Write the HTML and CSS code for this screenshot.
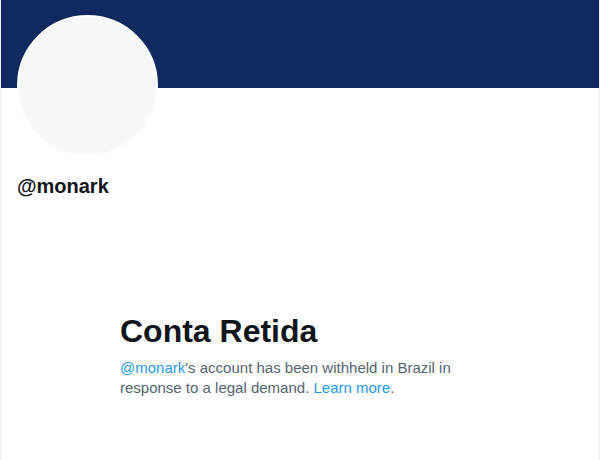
FILE: index.html
```html
<!DOCTYPE html>
<html lang="pt">
<head>
  <meta charset="UTF-8" />
  <meta name="viewport" content="width=device-width, initial-scale=1.0"/>
  <title>@monark</title>
  <link rel="stylesheet" href="styles.css">
</head>
<body>
  <div class="page">
    <div class="banner"></div>
    <div class="profile">
      <div class="avatar"></div>
      <div class="handle">@monark</div>
    </div>
    <div class="notice">
      <h1 class="notice-title">Conta Retida</h1>
      <p class="notice-text"><a href="#" class="link">@monark</a>'s account has been withheld in Brazil in response to a legal demand. <a href="#" class="link">Learn more</a>.</p>
    </div>
  </div>
</body>
</html>
```

FILE: styles.css
```css
* {
  box-sizing: border-box;
}

body {
  margin: 0;
  background: #fff;
  font-family: "Liberation Sans", Arial, sans-serif;
  color: #0f1419;
}

.page {
  width: 600px;
  min-height: 100vh;
  border-left: 1px solid #eff3f4;
  border-right: 1px solid #eff3f4;
}

.banner {
  height: 88px;
  background: #10295f;
}

.profile {
  padding: 0 16px;
}

.avatar {
  width: 141px;
  height: 141px;
  margin-top: -73px;
  border-radius: 50%;
  background: #f7f9f9;
  border: 2px solid #fbfcfc;
}

.handle {
  margin-top: 19px;
  font-size: 20px;
  line-height: 23px;
  font-weight: bold;
}

.notice {
  padding: 115px 0 0 119px;
}

.notice-title {
  margin: 0 0 9px;
  font-size: 32px;
  line-height: 36px;
  font-weight: bold;
}

.notice-text {
  margin: 0;
  max-width: 345px;
  font-size: 15px;
  line-height: 20px;
  color: #536471;
}

.link {
  color: #1d9bf0;
  text-decoration: none;
}
```
